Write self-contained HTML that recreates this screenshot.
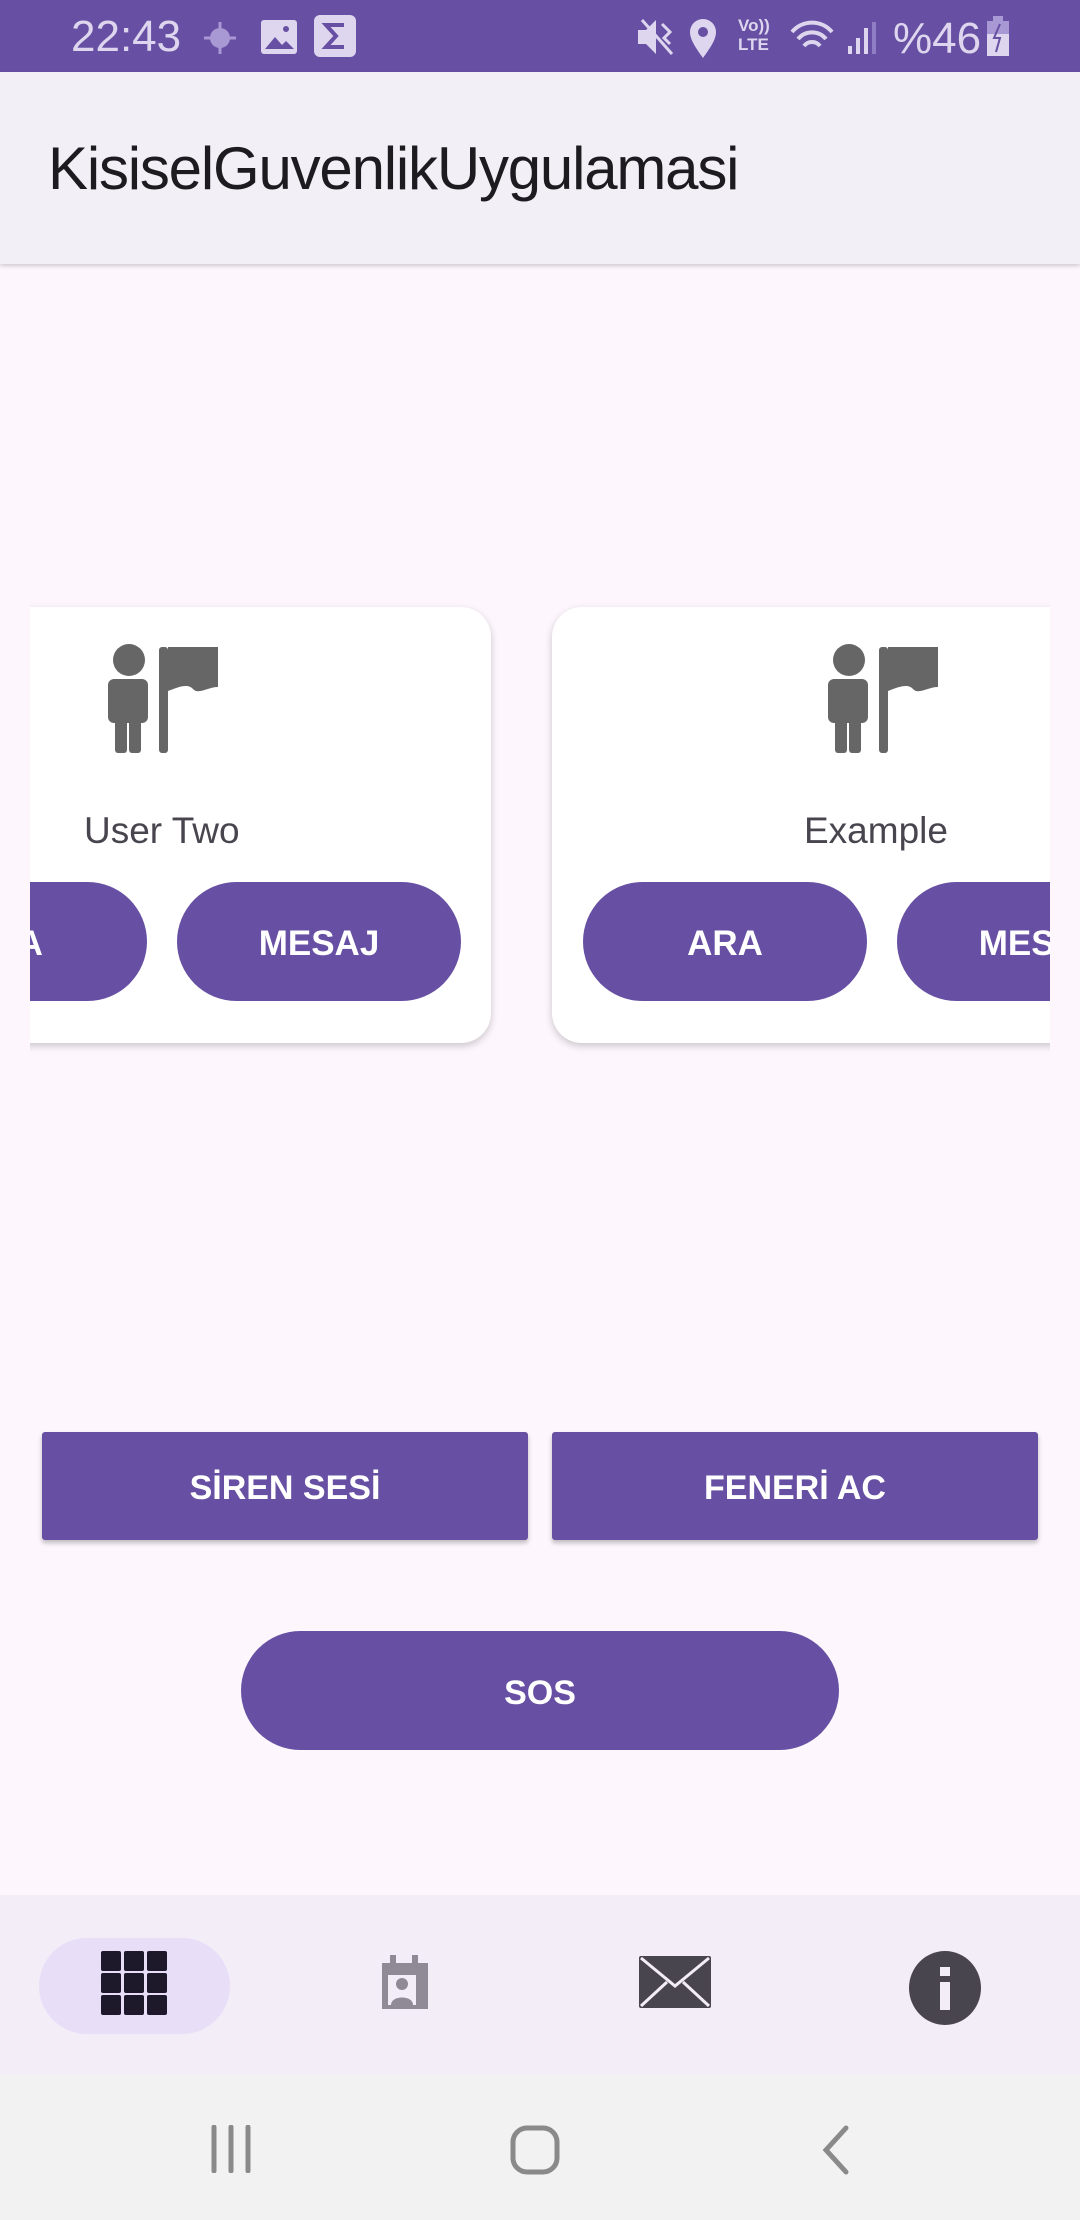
<!DOCTYPE html>
<html><head><meta charset="utf-8"><style>
*{margin:0;padding:0;box-sizing:border-box}
body{width:1080px;height:2220px;position:relative;overflow:hidden;background:#fdf7fd;font-family:"Liberation Sans",sans-serif}
.abs{position:absolute}
#status{left:0;top:0;width:1080px;height:72px;background:#6750a3;color:#ddd6ee}
#appbar{left:0;top:72px;width:1080px;height:192px;background:#f3eff7;box-shadow:0 2px 4px rgba(0,0,0,.18)}
#title{left:48px;top:134px;font-size:60px;color:#1d1b20;letter-spacing:-1.2px}
#clip{left:30px;top:560px;width:1020px;height:540px;overflow:hidden}
.card{position:absolute;top:47px;width:659px;height:436px;background:#fff;border-radius:30px;box-shadow:0 3px 8px rgba(0,0,0,.2)}
.pill{position:absolute;top:275px;width:284px;height:119px;border-radius:60px;background:#6750a3;color:#fff;font-weight:bold;font-size:35px;display:flex;align-items:center;justify-content:center;padding-top:4px}
.name{position:absolute;top:203px;font-size:37px;color:#49454f;left:252px}
.sq{position:absolute;top:1432px;height:108px;width:486px;background:#6750a3;color:#fff;font-weight:bold;font-size:34px;display:flex;align-items:center;justify-content:center;border-radius:3px;box-shadow:0 3px 5px rgba(0,0,0,.25);padding-top:4px}
#nav{left:0;top:1895px;width:1080px;height:180px;background:#f3edf7}
#sys{left:0;top:2075px;width:1080px;height:145px;background:#f2f2f2}
</style></head><body>
<div id="status" class="abs">
 <div class="abs" style="left:71px;top:12px;font-size:44px;color:#ddd6ee">22:43</div>
 <svg class="abs" style="left:200px;top:18px" width="40" height="40" viewBox="0 0 40 40"><circle cx="20" cy="20" r="10" fill="#a898d4"/><path d="M20 4v8M20 28v8M4 20h8M28 20h8" stroke="#a898d4" stroke-width="3"/></svg>
 <svg class="abs" style="left:260px;top:19px" width="38" height="36"><rect x="1" y="1" width="36" height="34" rx="3" fill="#ddd6ee"/><path d="M5 30l10-12 7 8 4-4 8 8z" fill="#6750a3"/><circle cx="26" cy="10" r="3" fill="#6750a3"/></svg>
 <svg class="abs" style="left:314px;top:15px" width="42" height="42"><rect width="42" height="42" rx="6" fill="#ddd6ee"/><path d="M30 10H12l10 11-10 11h18" stroke="#6750a3" stroke-width="4" fill="none"/></svg>
 <svg class="abs" style="left:636px;top:18px" width="40" height="38"><path d="M2 12h8l10-10v34L10 26H2z" fill="#ddd6ee"/><path d="M26 6l8 8-6 6 6 6M6 2l30 34" stroke="#ddd6ee" stroke-width="3" fill="none"/></svg>
 <svg class="abs" style="left:688px;top:18px" width="30" height="40"><path d="M15 40C8 30 2 22 2 14a13 13 0 0 1 26 0c0 8-6 16-13 26z" fill="#ddd6ee"/><circle cx="15" cy="14" r="5" fill="#6750a3"/></svg>
 <div class="abs" style="left:738px;top:16px;font-size:17px;line-height:19px;color:#ddd6ee;font-weight:bold">Vo))<br>LTE</div>
 <svg class="abs" style="left:790px;top:18px" width="90" height="40"><path d="M2 14a26 26 0 0 1 40 0M8 21a18 18 0 0 1 28 0M14 28a10 10 0 0 1 16 0" stroke="#ddd6ee" stroke-width="4" fill="none"/><path d="M60 36v-8M68 36V20M76 36V10" stroke="#ddd6ee" stroke-width="4"/><path d="M84 36V4" stroke="#8f7ec4" stroke-width="4"/></svg>
 <div class="abs" style="left:893px;top:14px;font-size:44px;color:#ddd6ee">%46</div>
 <svg class="abs" style="left:986px;top:16px" width="24" height="40"><rect x="7" y="0" width="10" height="5" fill="#a898d4"/><rect x="1" y="5" width="22" height="35" fill="#a898d4"/><rect x="1" y="18" width="22" height="22" fill="#ddd6ee"/><path d="M14 8l-6 14h6l-4 14" stroke="#6750a3" stroke-width="2" fill="none"/></svg>
</div>
<div id="appbar" class="abs"></div>
<div id="title" class="abs">KisiselGuvenlikUygulamasi</div>

<div id="clip" class="abs">
 <div class="card" style="left:-198px">
  <svg class="abs" style="left:275px;top:36px" width="112" height="110" viewBox="0 0 112 110"><g fill="#666"><circle cx="22" cy="17" r="16"/><rect x="1" y="36" width="40" height="44" rx="6"/><rect x="8" y="70" width="12" height="40" rx="3"/><rect x="22" y="70" width="12" height="40" rx="3"/><rect x="52" y="4" width="9" height="106" rx="3"/><path d="M61 4h50v40c-10 0-20 8-25 2s-15-2-25 2z"/></g></svg>
  <div class="name">User Two</div>
  <div class="pill" style="left:31px">ARA</div>
  <div class="pill" style="left:345px">MESAJ</div>
 </div>
 <div class="card" style="left:522px">
  <svg class="abs" style="left:275px;top:36px" width="112" height="110" viewBox="0 0 112 110"><g fill="#666"><circle cx="22" cy="17" r="16"/><rect x="1" y="36" width="40" height="44" rx="6"/><rect x="8" y="70" width="12" height="40" rx="3"/><rect x="22" y="70" width="12" height="40" rx="3"/><rect x="52" y="4" width="9" height="106" rx="3"/><path d="M61 4h50v40c-10 0-20 8-25 2s-15-2-25 2z"/></g></svg>
  <div class="name">Example</div>
  <div class="pill" style="left:31px">ARA</div>
  <div class="pill" style="left:345px">MESAJ</div>
 </div>
</div>

<div class="sq" style="left:42px">SİREN SESİ</div>
<div class="sq" style="left:552px">FENERİ AC</div>
<div class="abs" style="left:241px;top:1631px;width:598px;height:119px;border-radius:60px;background:#6750a3;color:#fff;font-weight:bold;font-size:34px;display:flex;align-items:center;justify-content:center;padding-top:5px">SOS</div>

<div id="nav" class="abs">
 <div class="abs" style="left:39px;top:43px;width:191px;height:96px;border-radius:48px;background:#e8def8"></div>
 <svg class="abs" style="left:100px;top:55px" width="68" height="66"><g fill="#1d192b"><rect x="1" y="1" width="20" height="20" rx="2"/><rect x="24" y="1" width="20" height="20" rx="2"/><rect x="47" y="1" width="20" height="20" rx="2"/><rect x="1" y="23" width="20" height="20" rx="2"/><rect x="24" y="23" width="20" height="20" rx="2"/><rect x="47" y="23" width="20" height="20" rx="2"/><rect x="1" y="45" width="20" height="20" rx="2"/><rect x="24" y="45" width="20" height="20" rx="2"/><rect x="47" y="45" width="20" height="20" rx="2"/></g></svg>
 <svg class="abs" style="left:382px;top:60px" width="46" height="54"><g fill="#8f8a96"><rect x="0" y="8" width="46" height="46"/><rect x="8" y="0" width="6" height="12"/><rect x="30" y="0" width="6" height="12"/></g><rect x="6" y="20" width="28" height="30" fill="#f3edf7"/><circle cx="20" cy="29" r="6" fill="#8f8a96"/><path d="M9 50c0-10 22-10 22 0z" fill="#8f8a96"/></svg>
 <svg class="abs" style="left:639px;top:61px" width="72" height="52"><rect width="72" height="52" rx="2" fill="#49454f"/><path d="M2 2l34 28 34-28M2 50l26-24M70 50L44 26" stroke="#f3edf7" stroke-width="3" fill="none"/></svg>
 <svg class="abs" style="left:909px;top:56px" width="72" height="74"><ellipse cx="36" cy="37" rx="36" ry="37" fill="#49454f"/><rect x="31" y="16" width="10" height="9" fill="#f3edf7"/><rect x="31" y="31" width="10" height="28" fill="#f3edf7"/></svg>
</div>
<div id="sys" class="abs">
 <svg class="abs" style="left:210px;top:50px" width="44" height="48"><path d="M4 2v44M21 2v44M38 2v44" stroke="#8a8a8a" stroke-width="5" stroke-linecap="round"/></svg>
 <svg class="abs" style="left:510px;top:50px" width="50" height="50"><rect x="3" y="3" width="44" height="44" rx="14" fill="none" stroke="#8a8a8a" stroke-width="5"/></svg>
 <svg class="abs" style="left:820px;top:50px" width="30" height="50"><path d="M26 3L6 25l20 22" fill="none" stroke="#8a8a8a" stroke-width="5" stroke-linecap="round"/></svg>
</div>
</body></html>
